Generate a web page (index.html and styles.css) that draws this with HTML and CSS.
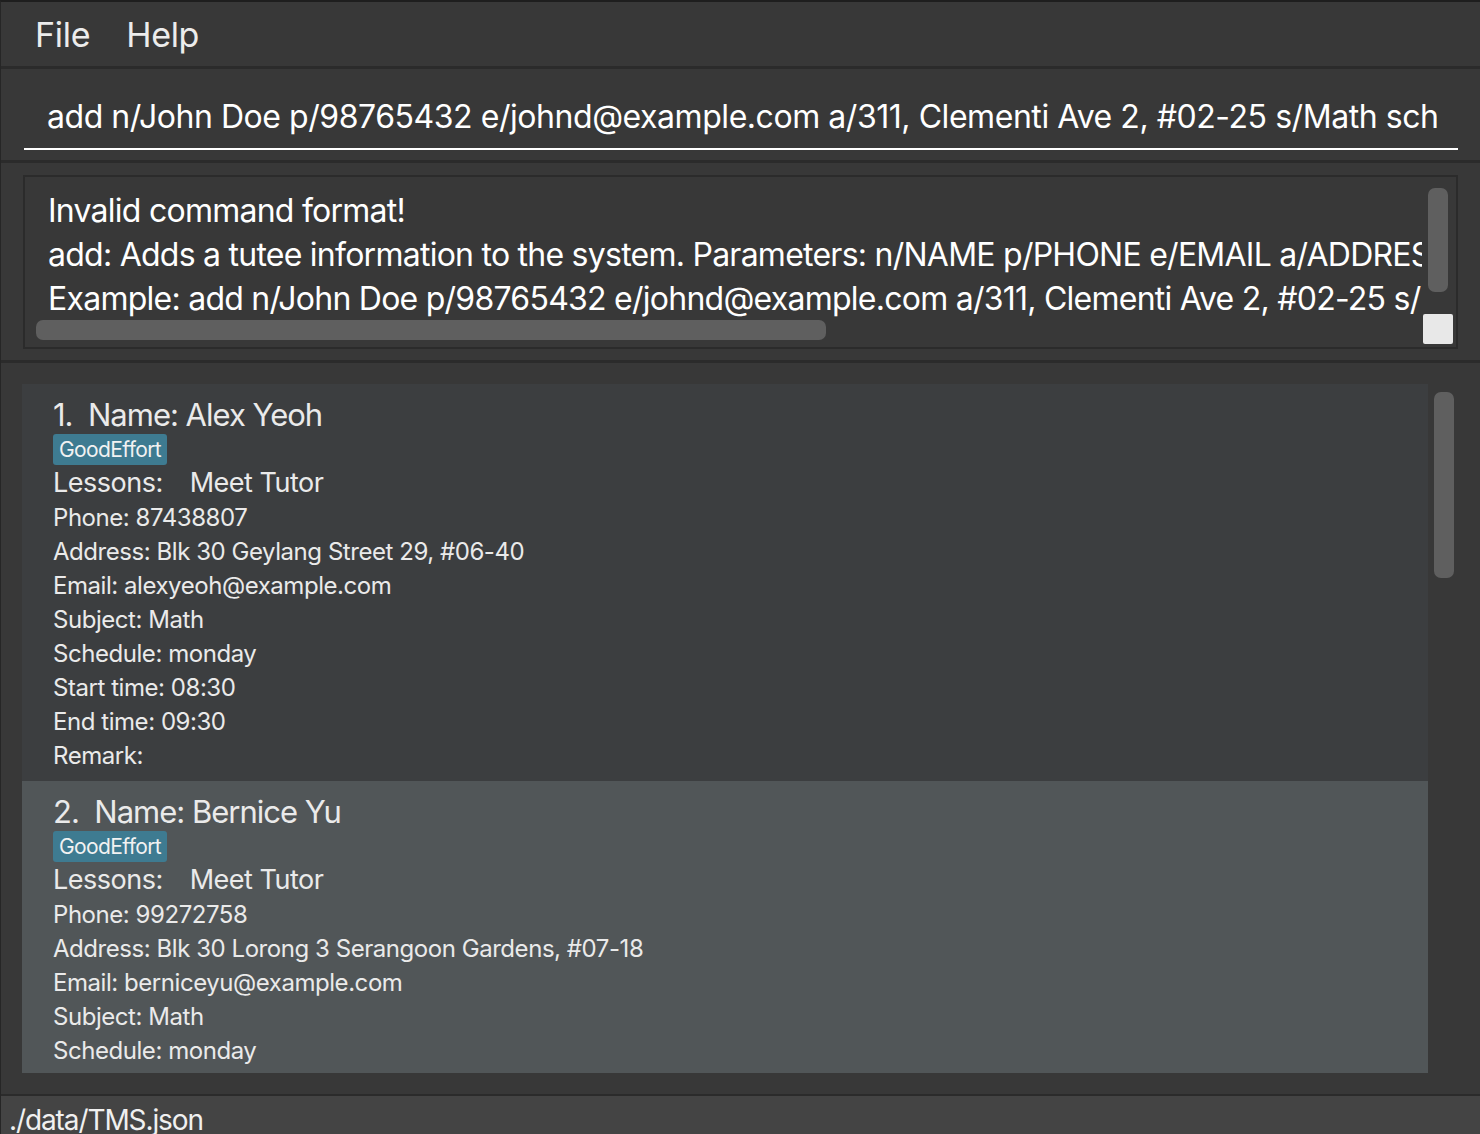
FILE: index.html
```html
<!DOCTYPE html>
<html>
<head>
  <meta charset="utf-8">
  <title>TMS</title>
  <link rel="stylesheet" href="styles.css">
</head>
<body>
  <div class="window">
    <div class="menu-bar">
      <span class="menu-item">File</span>
      <span class="menu-item">Help</span>
    </div>
    <div class="command-pane">
      <div class="command-box">
        <span class="command-text">add n/John Doe p/98765432 e/johnd@example.com a/311, Clementi Ave 2, #02-25 s/Math sch</span>
      </div>
    </div>
    <div class="result-pane">
      <div class="result-box">
        <div class="result-text">
          <div>Invalid command format!</div>
          <div>add: Adds a tutee information to the system. Parameters: n/NAME p/PHONE e/EMAIL a/ADDRESS s/SUBJECT</div>
          <div>Example: add n/John Doe p/98765432 e/johnd@example.com a/311, Clementi Ave 2, #02-25 s/Math</div>
        </div>
        <div class="vbar"><div class="thumb"></div></div>
        <div class="hbar"><div class="thumb"></div></div>
        <div class="corner"></div>
      </div>
    </div>
    <div class="list-pane">
      <div class="cards">
        <div class="card">
          <div class="card-name">1.&nbsp; Name: Alex Yeoh</div>
          <div class="tags"><span class="tag">GoodEffort</span></div>
          <div class="lessons">Lessons:<span class="gap"></span>Meet Tutor</div>
          <div class="field">Phone: 87438807</div>
          <div class="field">Address: Blk 30 Geylang Street 29, #06-40</div>
          <div class="field">Email: alexyeoh@example.com</div>
          <div class="field">Subject: Math</div>
          <div class="field">Schedule: monday</div>
          <div class="field">Start time: 08:30</div>
          <div class="field">End time: 09:30</div>
          <div class="field">Remark:</div>
        </div>
        <div class="card odd">
          <div class="card-name">2.&nbsp; Name: Bernice Yu</div>
          <div class="tags"><span class="tag">GoodEffort</span></div>
          <div class="lessons">Lessons:<span class="gap"></span>Meet Tutor</div>
          <div class="field">Phone: 99272758</div>
          <div class="field">Address: Blk 30 Lorong 3 Serangoon Gardens, #07-18</div>
          <div class="field">Email: berniceyu@example.com</div>
          <div class="field">Subject: Math</div>
          <div class="field">Schedule: monday</div>
        </div>
      </div>
      <div class="list-bar"><div class="thumb"></div></div>
    </div>
    <div class="status-bar">./data/TMS.json</div>
  </div>
</body>
</html>
```

FILE: styles.css
```css
html, body {margin: 0; padding: 0; height: 100%;}
body {background: #383838; color: #f0f0f0; font-family: Inter, "Noto Sans", sans-serif; overflow: hidden;}

.window {height: 1134px; display: flex; flex-direction: column; border-top: 2px solid #1e1e1e; border-left: 1px solid #262626; box-sizing: border-box;}

.menu-bar {height: 64px; display: flex; align-items: center; padding-left: 34px; gap: 36px; background: #383838; border-bottom: 3px solid #2b2b2b; flex-shrink: 0;}
.menu-item {font-size: 34px; letter-spacing: -0.3px; color: #ececec;}

.command-pane {height: 94px; box-sizing: border-box; padding: 0 22px 0 23px; border-bottom: 3px solid #2b2b2b; flex-shrink: 0;}
.command-box {height: 81px; border-bottom: 2px solid #fff; padding: 0 21px 12px 23px; display: flex; align-items: flex-end; box-sizing: border-box; overflow: hidden; white-space: nowrap;}
.command-text {font-size: 32px; letter-spacing: -0.45px; color: #fff; overflow: hidden;}

.result-pane {height: 200px; box-sizing: border-box; padding: 12px 22px 11px 22px; border-bottom: 3px solid #2b2b2b; flex-shrink: 0;}
.result-box {position: relative; height: 100%; box-sizing: border-box; border: 2px solid #2b2b2b; overflow: hidden;}
.result-text {padding: 12px 0 0 23px; font-size: 32px; letter-spacing: -0.75px; line-height: 44px; white-space: nowrap; color: #fff; width: 1374px; overflow: hidden;}
.result-box .vbar {position: absolute; right: 8px; top: 11px; width: 20px; height: 104px;}
.result-box .hbar {position: absolute; left: 11px; bottom: 7px; width: 790px; height: 20px;}
.thumb {width: 100%; height: 100%; background: #5f5f5f; border-radius: 7px;}
.corner {position: absolute; right: 3px; bottom: 3px; width: 30px; height: 30px; background: #e8e8e8; border-radius: 2px;}

.list-pane {flex: 1; display: flex; padding: 21px 0 21px 21px; overflow: hidden; border-bottom: 2px solid #2b2b2b;}
.cards {width: 1406px; display: flex; flex-direction: column; flex-shrink: 0; overflow: hidden;}
.card {background: #3c3e40; padding: 13px 30px 8px 31px; flex-shrink: 0;}
.card.odd {background: #515658;}
.card-name {font-size: 31px; line-height: 36px; color: #eaeaea; letter-spacing: -1px;}
.tags {display: flex; margin-top: 1px;}
.tag {background: #3e7b91; color: #f2f2f2; font-size: 21px; letter-spacing: -0.6px; line-height: 31px; padding: 0 6px; border-radius: 3px;}
.lessons {font-size: 27px; line-height: 36px; color: #eaeaea; display: flex; letter-spacing: -0.5px;}
.lessons .gap {width: 27px;}
.field {font-size: 24px; line-height: 34px; color: #eaeaea; letter-spacing: -0.45px;}
.list-bar {width: 20px; height: 186px; margin: 8px 0 0 6px;}

.status-bar {height: 38px; background: #444; padding-left: 8px; font-size: 28px; line-height: 48px; letter-spacing: -1.1px; color: #f0f0f0; overflow: hidden; flex-shrink: 0;}
```
